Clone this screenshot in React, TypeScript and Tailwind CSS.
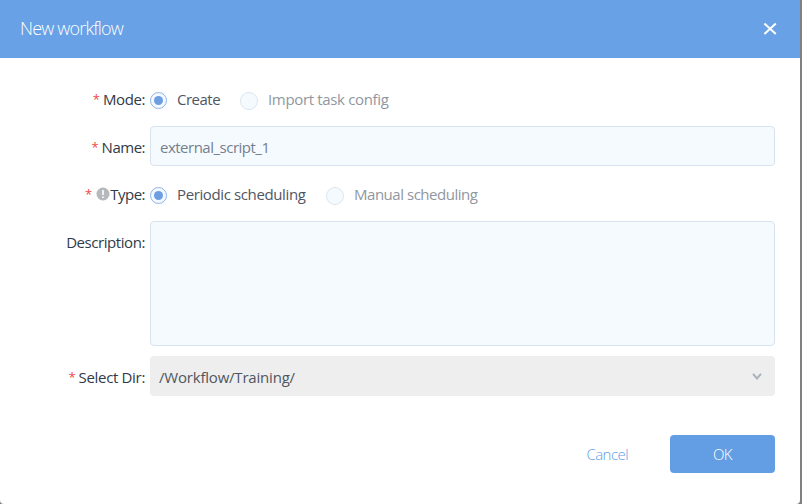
import type { ReactNode } from "react";

function Label({ children, required = true, info = false, className }: { children: ReactNode; required?: boolean; info?: boolean; className: string }) {
  return (
    <div className="flex w-[145px] shrink-0 items-center justify-end text-[#303a48]">
      {required && <span className={info ? "mr-[5px] text-[13px] text-[#f04848]" : "mr-[3px] text-[13px] text-[#f04848]"}>*</span>}
      {info && (
        <svg className="-ml-px size-[14px]" viewBox="0 0 14 14">
          <circle cx="7" cy="7" r="6.5" fill="#b5b8bc" />
          <path d="M7 3v5M7 9.5v1.6" stroke="#fff" strokeWidth="1.6" />
        </svg>
      )}
      <span className={className}>{children}</span>
    </div>
  );
}

function Radio({ checked = false }: { checked?: boolean }) {
  return checked ? (
    <span className="mt-[3px] flex size-[17px] shrink-0 items-center justify-center rounded-full border border-[#8fb4e4] bg-[#f4f9ff]">
      <span className="size-[9px] rounded-full bg-[#6d9fe0]" />
    </span>
  ) : (
    <span className="mt-[3px] size-[18px] shrink-0 rounded-full border border-[#dce5ef] bg-[#f5faff]" />
  );
}

export default function App() {
  return (
    <div className="h-[504px] w-[802px] overflow-hidden bg-[#808080] font-['Open_Sans','Noto_Sans',sans-serif] text-[15px] leading-5 whitespace-nowrap">
      <div className="h-[504px] w-[800px] overflow-hidden rounded-b-[4px] bg-white">
        <header className="flex h-[58px] items-center justify-between bg-[#68a1e5] pr-[23px] pl-5 text-white">
          <h1 className="-mt-0.5 text-[18px] font-light tracking-[-0.82px]">New workflow</h1>
          <svg className="size-[14px]" viewBox="0 0 14 14" fill="none" stroke="#fff" strokeWidth="2">
            <path d="M1.4 1.4l11.4 10.6M12.8 1.4L1.4 12" />
          </svg>
        </header>
        <main className="pt-[31px]">
          <div className="flex h-5 items-center">
            <Label className="tracking-[-0.4px]">Mode:</Label>
            <div className="ml-[5px] flex items-center text-[#50565f]">
              <Radio checked />
              <span className="ml-[10px] w-[63px] tracking-[-0.5px]">Create</span>
              <Radio />
              <span className="ml-[10px] tracking-[-0.34px] text-[#90979f]">Import task config</span>
            </div>
          </div>
          <div className="mt-[17px] flex h-10 items-center">
            <div className="pt-px">
              <Label className="tracking-[-0.5px]">Name:</Label>
            </div>
            <div className="ml-[5px] flex h-10 w-[625px] items-center rounded border border-[#d9e2ef] bg-[#f5faff] pt-0.5 pl-[9px] tracking-[-0.5px] text-[#757f8d]">
              external_script_1
            </div>
          </div>
          <div className="mt-[18px] flex h-5 items-center">
            <Label info className="tracking-[-0.5px]">Type:</Label>
            <div className="ml-[5px] flex items-center text-[#50565f]">
              <Radio checked />
              <span className="ml-[10px] w-[149px] tracking-[-0.38px]">Periodic scheduling</span>
              <Radio />
              <span className="ml-[10px] tracking-[-0.47px] text-[#90979f]">Manual scheduling</span>
            </div>
          </div>
          <div className="mt-[17px] flex h-[125px] items-start">
            <div className="pt-[11px]">
              <Label required={false} className="tracking-[-0.43px]">Description:</Label>
            </div>
            <div className="ml-[5px] h-[125px] w-[625px] rounded border border-[#d9e2ef] bg-[#f5faff]" />
          </div>
          <div className="mt-[10px] flex h-10 items-center">
            <div className="pt-px">
              <Label className="tracking-[-0.33px]">Select Dir:</Label>
            </div>
            <div className="ml-[5px] flex h-10 w-[625px] items-center justify-between rounded bg-[#eeeeee] pr-[13px] pl-[9px] text-[#50565f]">
              <span className="pt-px tracking-[-0.2px]">/Workflow/Training/</span>
              <svg className="h-[7px] w-[10px]" viewBox="0 0 10 7" fill="none" stroke="#a9b2bb" strokeWidth="2">
                <path d="M1 .8l4 4.7L9 .8" />
              </svg>
            </div>
          </div>
        </main>
        <footer className="mt-[39px] flex h-[38px] items-center justify-end pr-[25px] font-light">
          <button className="mr-[42px] tracking-[-0.55px] text-[#5f9ce3]">Cancel</button>
          <button className="h-[38px] w-[105px] rounded bg-[#639ee4] tracking-[-0.7px] text-white">OK</button>
        </footer>
      </div>
    </div>
  );
}
